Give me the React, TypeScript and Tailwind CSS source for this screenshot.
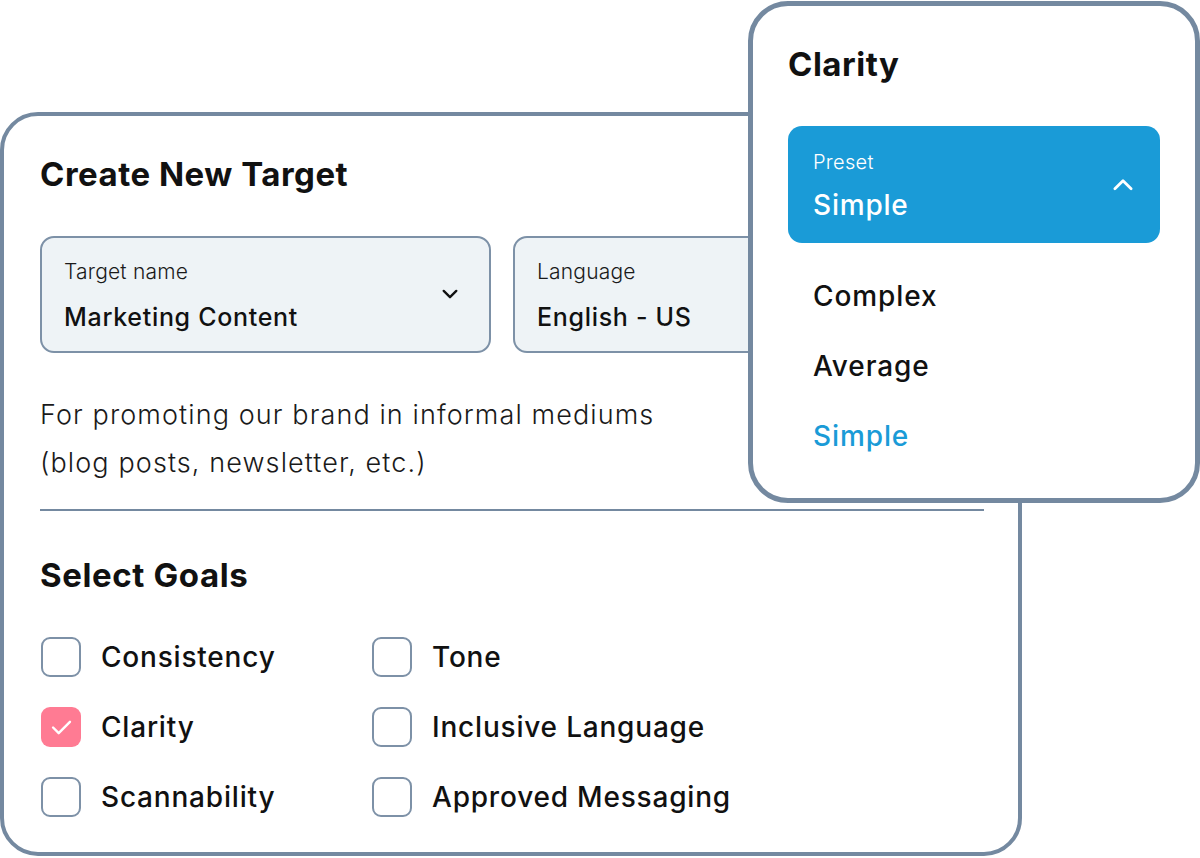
const goals = [
  { label: "Consistency", checked: false },
  { label: "Tone", checked: false },
  { label: "Clarity", checked: true },
  { label: "Inclusive Language", checked: false },
  { label: "Scannability", checked: false },
  { label: "Approved Messaging", checked: false },
];

function Chevron({ up = false, className = "" }: { up?: boolean; className?: string }) {
  return (
    <svg
      viewBox="0 0 20 12"
      className={className}
      fill="none"
      stroke="currentColor"
      strokeWidth={2.6}
      strokeLinecap="round"
      strokeLinejoin="round"
    >
      {up ? <path d="M2.5 10 L10 2.5 L17.5 10" /> : <path d="M3 2 L10 9 L17 2" />}
    </svg>
  );
}

function Field({ label, value, chevron }: { label: string; value: string; chevron?: boolean }) {
  return (
    <div className="flex h-[117px] w-[451px] items-center justify-between rounded-[14px] border-2 border-[#7d91a7] bg-[#eef3f6] pl-[22px] pr-[30px]">
      <div className="flex flex-col gap-[15px] pt-[2px]">
        <span className="text-[21px] font-light leading-[28px] tracking-[0.2px] text-[#1a1a1a]">{label}</span>
        <span className="text-[25px] font-medium leading-[32px] tracking-[0.7px] text-[#111]">{value}</span>
      </div>
      {chevron && <Chevron className="h-[11px] w-[18px] text-[#111]" />}
    </div>
  );
}

function Checkbox({ checked }: { checked: boolean }) {
  if (checked) {
    return (
      <span className="flex h-[40px] w-[40px] shrink-0 items-center justify-center rounded-[9px] bg-[#ff7b93]">
        <svg viewBox="0 0 22 16" className="h-[15px] w-[21px]" fill="none" stroke="white" strokeWidth={2.6} strokeLinecap="round" strokeLinejoin="round">
          <path d="M2 8 L8 14 L20 2" />
        </svg>
      </span>
    );
  }
  return <span className="h-[40px] w-[40px] shrink-0 rounded-[9px] border-2 border-[#7d91a7] bg-white" />;
}

export default function App() {
  return (
    <div className="relative h-[858px] w-[1200px] overflow-hidden bg-white font-['Inter','Liberation_Sans',sans-serif] text-[#111]">
      <div className="mt-[112px] h-[744px] w-[1022px] rounded-[38px] border-4 border-[#7489a0] bg-white px-[36px] pt-[38px]">
        <h1 className="text-[33px] font-bold leading-[40px] tracking-[0.5px]">Create New Target</h1>

        <div className="mt-[42px] flex gap-[22px]">
          <Field label="Target name" value="Marketing Content" chevron />
          <Field label="Language" value="English - US" chevron />
        </div>

        <p className="mt-[38px] text-[27px] font-light leading-[48px] tracking-[1.1px] text-[#1a1a1a]">
          For promoting our brand in informal mediums
          <br />
          (blog posts, newsletter, etc.)
        </p>

        <div className="mt-[22px] h-[2px] w-[944px] bg-[#7489a0]" />

        <h2 className="mt-[44px] text-[33px] font-bold leading-[40px] tracking-[0.6px]">Select Goals</h2>

        <div className="mt-[42px] grid w-[700px] grid-cols-[331px_1fr] gap-y-[30px] pl-px">
          {goals.map((g) => (
            <label key={g.label} className="flex h-[40px] items-center gap-[20px]">
              <Checkbox checked={g.checked} />
              <span className="text-[28px] font-medium leading-[40px] tracking-[0.8px] text-[#111]">{g.label}</span>
            </label>
          ))}
        </div>
      </div>

      <div className="absolute left-[748px] top-[1px] h-[502px] w-[452px] rounded-[40px] border-[5px] border-[#7489a0] bg-white pl-[35px] pr-[36px] pt-[38px]">
        <h2 className="text-[33px] font-bold leading-[40px] tracking-[0.5px]">Clarity</h2>

        <div className="mt-[42px] flex h-[117px] w-[372px] items-center justify-between rounded-[14px] bg-[#1a9bd7] pl-[25px] pr-[26px] text-white">
          <div className="flex flex-col gap-[13px]">
            <span className="text-[20px] font-light leading-[28px] tracking-[0.3px]">Preset</span>
            <span className="text-[28px] font-medium leading-[32px] tracking-[0.8px]">Simple</span>
          </div>
          <Chevron up className="h-[13px] w-[22px] text-white" />
        </div>

        <ul className="mt-[33px] flex flex-col gap-[30px] pl-[25px]">
          <li className="text-[28px] font-medium leading-[40px] tracking-[0.9px]">Complex</li>
          <li className="text-[28px] font-medium leading-[40px] tracking-[0.9px]">Average</li>
          <li className="text-[28px] font-medium leading-[40px] tracking-[0.9px] text-[#1a9bd7]">Simple</li>
        </ul>
      </div>
    </div>
  );
}
